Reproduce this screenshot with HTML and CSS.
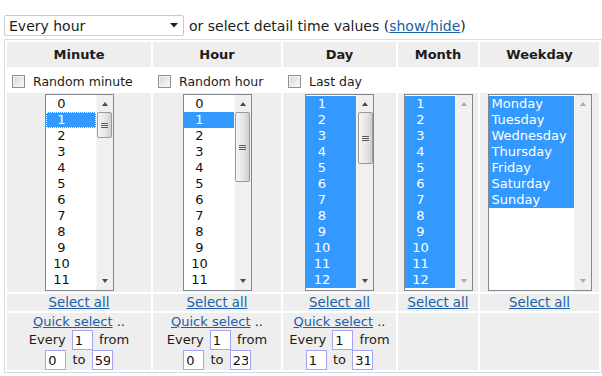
FILE: index.html
```html
<html>

<head>
    <title>Cron schedule</title>
    <link rel="stylesheet" href="styles.css">
</head>

<body>

    <div class="page">
        <div class="topline">
            <div class="dropdown">
                <span>Every hour</span>
                <svg class="caret" width="8" height="5" viewBox="0 0 8 5"><path d="M0 0h8L4 4.5z" fill="#222"/></svg>
            </div>
            <span>or select detail time values (<a href="#">show/hide</a>)</span>
        </div>

        <div class="cron">
            <div class="head">Minute</div>
            <div class="head">Hour</div>
            <div class="head">Day</div>
            <div class="head">Month</div>
            <div class="head">Weekday</div>

            <label class="check"><input type="checkbox"> Random minute</label>
            <label class="check"><input type="checkbox"> Random hour</label>
            <label class="check"><input type="checkbox"> Last day</label>
            <div class="check"></div>
            <div class="check"></div>

            <!-- minute -->
            <div class="pick">
                <div class="listbox">
                    <div class="opts">
                        <div><span>0</span></div>
                        <div class="sel focus"><span>1</span></div>
                        <div><span>2</span></div><div><span>3</span></div><div><span>4</span></div>
                        <div><span>5</span></div><div><span>6</span></div><div><span>7</span></div>
                        <div><span>8</span></div><div><span>9</span></div><div><span>10</span></div>
                        <div><span>11</span></div>
                    </div>
                    <div class="sbar">
                        <i class="arrow up"></i>
                        <b class="thumb" style="height: 26px"></b>
                        <i class="arrow down"></i>
                    </div>
                </div>
            </div>

            <!-- hour -->
            <div class="pick">
                <div class="listbox">
                    <div class="opts">
                        <div><span>0</span></div>
                        <div class="sel"><span>1</span></div>
                        <div><span>2</span></div><div><span>3</span></div><div><span>4</span></div>
                        <div><span>5</span></div><div><span>6</span></div><div><span>7</span></div>
                        <div><span>8</span></div><div><span>9</span></div><div><span>10</span></div>
                        <div><span>11</span></div>
                    </div>
                    <div class="sbar">
                        <i class="arrow up"></i>
                        <b class="thumb" style="height: 70px"></b>
                        <i class="arrow down"></i>
                    </div>
                </div>
            </div>

            <!-- day -->
            <div class="pick">
                <div class="listbox">
                    <div class="opts">
                        <div class="sel"><span>1</span></div><div class="sel"><span>2</span></div>
                        <div class="sel"><span>3</span></div><div class="sel"><span>4</span></div>
                        <div class="sel"><span>5</span></div><div class="sel"><span>6</span></div>
                        <div class="sel"><span>7</span></div><div class="sel"><span>8</span></div>
                        <div class="sel"><span>9</span></div><div class="sel"><span>10</span></div>
                        <div class="sel"><span>11</span></div><div class="sel"><span>12</span></div>
                    </div>
                    <div class="sbar">
                        <i class="arrow up"></i>
                        <b class="thumb" style="height: 52px"></b>
                        <i class="arrow down"></i>
                    </div>
                </div>
            </div>

            <!-- month -->
            <div class="pick">
                <div class="listbox">
                    <div class="opts">
                        <div class="sel"><span>1</span></div><div class="sel"><span>2</span></div>
                        <div class="sel"><span>3</span></div><div class="sel"><span>4</span></div>
                        <div class="sel"><span>5</span></div><div class="sel"><span>6</span></div>
                        <div class="sel"><span>7</span></div><div class="sel"><span>8</span></div>
                        <div class="sel"><span>9</span></div><div class="sel"><span>10</span></div>
                        <div class="sel"><span>11</span></div><div class="sel"><span>12</span></div>
                    </div>
                    <div class="sbar off">
                        <i class="arrow up"></i>
                        <i class="arrow down"></i>
                    </div>
                </div>
            </div>

            <!-- weekday -->
            <div class="pick">
                <div class="listbox wide">
                    <div class="opts names">
                        <div class="sel">Monday</div>
                        <div class="sel">Tuesday</div>
                        <div class="sel">Wednesday</div>
                        <div class="sel">Thursday</div>
                        <div class="sel">Friday</div>
                        <div class="sel">Saturday</div>
                        <div class="sel">Sunday</div>
                    </div>
                    <div class="sbar off">
                        <i class="arrow up"></i>
                        <i class="arrow down"></i>
                    </div>
                </div>
            </div>

            <div class="foot"><a href="#">Select all</a></div>
            <div class="foot"><a href="#">Select all</a></div>
            <div class="foot"><a href="#">Select all</a></div>
            <div class="foot"><a href="#">Select all</a></div>
            <div class="foot"><a href="#">Select all</a></div>

            <div class="quick">
                <div class="qline"><a href="#">Quick select</a> ..</div>
                <div class="qrow">Every <input type="text" value="1"> from</div>
                <div class="qrow"><input type="text" value="0"> to <input type="text" value="59"></div>
            </div>
            <div class="quick">
                <div class="qline"><a href="#">Quick select</a> ..</div>
                <div class="qrow">Every <input type="text" value="1"> from</div>
                <div class="qrow"><input type="text" value="0"> to <input type="text" value="23"></div>
            </div>
            <div class="quick">
                <div class="qline"><a href="#">Quick select</a> ..</div>
                <div class="qrow">Every <input type="text" value="1"> from</div>
                <div class="qrow"><input type="text" value="1"> to <input type="text" value="31"></div>
            </div>
            <div class="quick"></div>
            <div class="quick"></div>
        </div>
    </div>

</body>

</html>
```

FILE: styles.css
```css
body {
    margin: 0;
    background: #fff;
    color: #1c1c1c;
    font-family: "DejaVu Sans", Verdana, sans-serif;
    font-size: 13px;
}

a {
    color: #1c5ea6;
}

.page {
    padding: 15px 0 0 4px;
}

.topline {
    display: flex;
    align-items: center;
    gap: 5px;
    height: 21px;
    font-size: 14px;
}

.dropdown {
    box-sizing: border-box;
    width: 180px;
    height: 21px;
    padding: 0 5px 0 4px;
    border: 1px solid #cacaca;
    border-radius: 2px;
    display: flex;
    align-items: center;
    justify-content: space-between;
}

.cron {
    margin-top: 3px;
    display: grid;
    grid-template-columns: 144px 128px 113px 80px 119px;
    grid-template-rows: 25px 22px 199px 17px 57px;
    gap: 2px;
    padding: 2px;
    border: 1px solid #d5dde8;
    width: max-content;
}

.head {
    background: #eeeeee;
    font-weight: bold;
    display: flex;
    align-items: center;
    justify-content: center;
}

.check {
    display: flex;
    align-items: center;
    padding: 2px 0 0 5px;
    font-size: 12.5px;
}

.check input {
    appearance: none;
    width: 13px;
    height: 13px;
    margin: 0 8px 0 0;
    border: 1px solid #8f8f8f;
    background: linear-gradient(135deg, #d6d6d6, #fbfbfb);
    box-shadow: inset 0 0 0 1px #f4f4f4;
}

.pick {
    background: #eeeeee;
    display: flex;
    justify-content: center;
    padding-top: 1px;
}

.listbox {
    box-sizing: border-box;
    display: flex;
    width: 69px;
    height: 197px;
    border: 1px solid #828790;
    background: #fff;
}

.listbox.wide {
    width: 104px;
}

.opts {
    flex: 1;
    padding-top: 1px;
    overflow: hidden;
    color: #111;
}

.opts div {
    height: 16px;
    line-height: 16px;
}

.opts span {
    display: inline-block;
    width: 32px;
    text-align: center;
}

.opts.names div {
    padding-left: 3px;
}

.opts .sel {
    background: #3399ff;
    color: #fff;
}

.opts .focus {
    outline: 1px dotted #fff;
    outline-offset: -1px;
}

.sbar {
    width: 17px;
    background: #f0f0f0;
    border-left: 1px solid #f7f7f7;
    box-sizing: border-box;
    display: flex;
    flex-direction: column;
    align-items: center;
}

.arrow {
    width: 0;
    height: 0;
    border-left: 3.5px solid transparent;
    border-right: 3.5px solid transparent;
}

.arrow.up {
    margin: 7px 0 6px;
    border-bottom: 4px solid #4a4a4a;
}

.arrow.down {
    margin: auto 0 7px;
    border-top: 4px solid #4a4a4a;
}

.sbar.off .arrow.up {
    border-bottom-color: #a9a9a9;
}

.sbar.off .arrow.down {
    border-top-color: #a9a9a9;
}

.thumb {
    box-sizing: border-box;
    width: 15px;
    border: 1px solid #9a9a9a;
    border-radius: 2px;
    background: linear-gradient(90deg, #f6f6f6, #e6e6e6 55%, #cfcfcf);
    display: flex;
    align-items: center;
    justify-content: center;
}

.thumb::after {
    content: "";
    width: 7px;
    height: 3px;
    border-top: 1px solid #5a5a5a;
    border-bottom: 1px solid #5a5a5a;
    background: linear-gradient(#5a5a5a, #5a5a5a) center / 7px 1px no-repeat;
}

.foot {
    background: #eeeeee;
    text-align: center;
    line-height: 17px;
    font-size: 13.3px;
}

.quick {
    background: #eeeeee;
    text-align: center;
}

.qline {
    height: 16px;
    line-height: 16px;
    padding-top: 1px;
}

.qrow {
    height: 20px;
    line-height: 20px;
}

.qrow input {
    box-sizing: border-box;
    width: 21px;
    height: 20px;
    margin: 0 2px;
    padding: 0 2px;
    border: 1px solid #a4a4f4;
    font: 13px "DejaVu Sans", Verdana, sans-serif;
    color: #111;
    vertical-align: top;
}
```
